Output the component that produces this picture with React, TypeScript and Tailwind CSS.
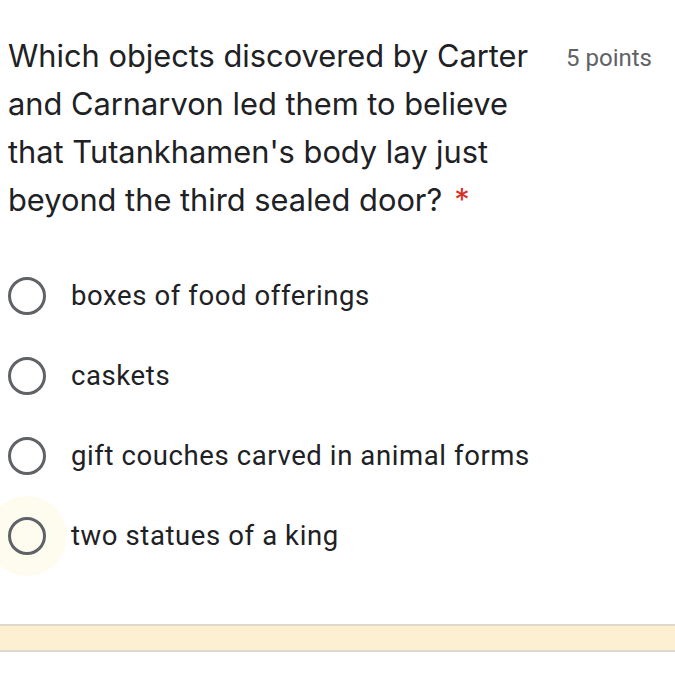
import React from 'react';

const options = [
  'boxes of food offerings',
  'caskets',
  'gift couches carved in animal forms',
  'two statues of a king',
];

function Radio({ focused }: { focused?: boolean }) {
  return (
    <div className="relative flex h-[40px] w-[40px] shrink-0 items-center justify-center">
      {focused && (
        <div className="absolute left-1/2 top-1/2 h-[80px] w-[80px] -translate-x-1/2 -translate-y-1/2 rounded-full bg-[#fefbef]" />
      )}
      <div className="relative h-[38px] w-[38px] rounded-full border-[3.5px] border-[#5f6368]" />
    </div>
  );
}

export default function App() {
  return (
    <div className="h-[673px] w-[675px] overflow-hidden bg-white" style={{ fontFamily: 'Roboto, "Noto Sans", sans-serif' }}>
      <div className="flex items-start justify-between pl-[8px] pr-[23px] pt-[32px]">
        <h1 className="w-[540px] text-[30.8px] leading-[48px] text-[#202124]" style={{ fontFamily: 'Inter, Roboto, sans-serif' }}>
          Which objects discovered by Carter and Carnarvon led them to believe that Tutankhamen's body lay just beyond the third sealed door?<span className="ml-[12px] text-[#d93025]">*</span>
        </h1>
        <span className="pt-[12px] text-[24px] leading-[28px] text-[#5f6368]">5 points</span>
      </div>

      <div className="mt-[52px] flex flex-col gap-[40px] pl-[7px]">
        {options.map((label, i) => (
          <div key={label} className="flex items-center gap-[24px]">
            <Radio focused={i === 3} />
            <span className="text-[27.5px] leading-[40px] tracking-[0.6px] text-[#202124]">{label}</span>
          </div>
        ))}
      </div>

      <div className="mt-[68px] h-[28px] border-y-2 border-[#ddd8cc] bg-[#fcefd2]" />
    </div>
  );
}
